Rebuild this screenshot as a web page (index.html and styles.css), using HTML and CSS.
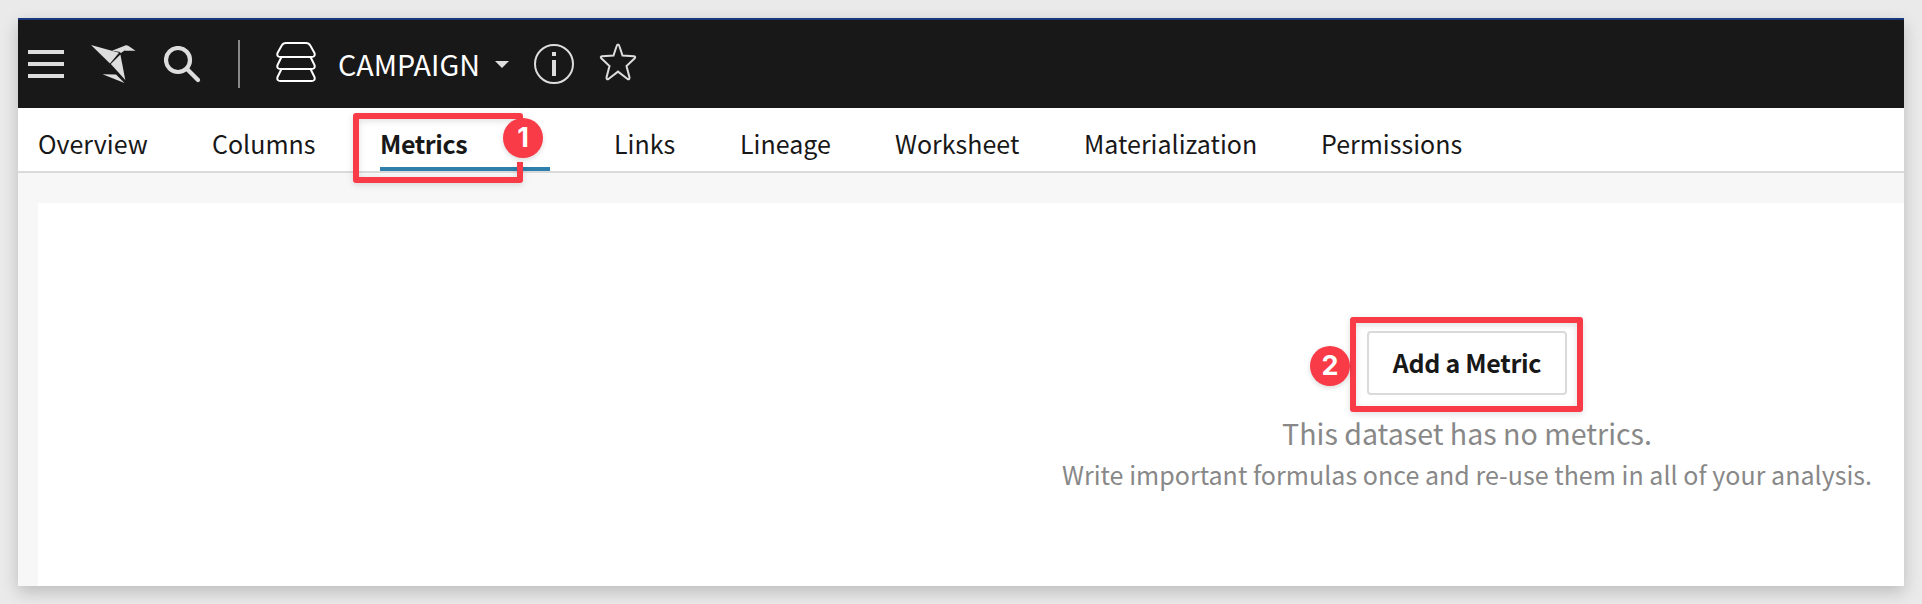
FILE: index.html
```html
<!DOCTYPE html>
<html lang="en">
<head>
<meta charset="utf-8">
<title>CAMPAIGN</title>
<link rel="stylesheet" href="styles.css">
</head>
<body>
<div class="window">
  <header class="topbar">
    <svg class="icon menu" width="36" height="28" viewBox="0 0 36 28"><path d="M0 2H36M0 14H36M0 26H36"/></svg>
    <svg class="icon bird" width="46" height="40" viewBox="0 0 46 40">
      <path d="M1 2L29 9.7L20 20.500Z"/><path d="M22 7.800L36.500 2L38 5L31 10L29 8.700Z"/><path d="M37.500 2.300L45.500 7.700H34.500Z"/><path d="M20.800 21L30.400 11.500L35.300 37Z"/><path d="M12.500 31.200L26 31.400L34.500 40Z"/>
    </svg>
    <svg class="icon search" width="37" height="37" viewBox="0 0 37 37"><circle cx="14" cy="14" r="12"/><path d="M23 23L34 34" stroke-linecap="round"/></svg>
    <span class="divider"></span>
    <svg class="icon stack" width="40" height="40" viewBox="0 0 40 40">
      <path d="M10 1H30Q33 1 34.3 3.5L38.5 11Q39.5 15 35.500 15H4.500Q.5 15 1.500 11L5.700 3.500Q7 1 10 1ZM5.500 15L1.500 23Q.5 27 4.500 27H35.500Q39.500 27 38.500 23L34.500 15M5.500 27L1.500 35Q.5 39 4.500 39H35.500Q39.500 39 38.500 35L34.500 27"/>
    </svg>
    <span class="title">CAMPAIGN</span>
    <svg class="caret" width="14" height="7" viewBox="0 0 14 7"><path d="M0 0H14L7 7Z"/></svg>
    <svg class="icon info" width="40" height="40" viewBox="0 0 40 40"><circle cx="20" cy="20" r="19"/><path d="M18 8H22V12H18ZM18 16H22V32H18Z"/></svg>
    <svg class="icon star" width="38" height="38" viewBox="0 0 38 38"><path d="M19 1.500Q20 1.500 20.700 4L23.500 12.500L35 13.300Q37 13.700 35.700 15.300L27.500 23L30.500 34.500Q30.500 37 28.500 36L19 28.600L9.500 36Q7.500 37 7.500 34.500L10.500 23L2.300 15.300Q1 13.700 3 13.300L14.500 12.500L17.300 4Q18 1.500 19 1.500Z"/></svg>
  </header>
  <nav class="tabs">
    <a class="tab overview">Overview</a>
    <a class="tab columns">Columns</a>
    <a class="tab active">Metrics</a>
    <a class="tab links">Links</a>
    <a class="tab lineage">Lineage</a>
    <a class="tab worksheet">Worksheet</a>
    <a class="tab material">Materialization</a>
    <a class="tab perms">Permissions</a>
  </nav>
  <main class="content">
    <section class="panel">
      <button class="add">Add a Metric</button>
      <p class="lead">This dataset has no metrics.</p>
      <p class="hint">Write important formulas once and re-use them in all of your analysis.</p>
    </section>
  </main>
</div>
<svg class="callout callout-tab" width="170" height="70" viewBox="0 0 170 70"><path d="M167 6V3H3V67H167V49"/></svg>
<span class="badge badge-one">1</span>
<svg class="callout callout-add" width="233" height="95" viewBox="0 0 233 95"><rect x="3" y="3" width="227" height="89"/></svg>
<span class="badge badge-two">2</span>
</body>
</html>
```
FILE: styles.css
```css
* { box-sizing: border-box; }
body {
  margin: 0;
  padding: 18px;
  height: 604px;
  overflow: hidden;
  position: relative;
  background: #eaeaea;
  color: #181818;
  font-family: "Noto Sans CJK SC", "Noto Sans", sans-serif;
}
.window {
  width: 1886px;
  height: 568px;
  display: flex;
  flex-direction: column;
  background: #f7f7f7;
  box-shadow: 0 6px 16px rgba(0, 0, 0, .2);
}
.topbar {
  height: 90px;
  flex: none;
  display: flex;
  align-items: flex-start;
  padding-left: 10px;
  background: #181818;
  border-top: 2px solid #18377c;
}
.icon { flex: none; fill: none; stroke: #ddd; stroke-width: 2; }
.menu { margin-top: 30px; stroke-width: 4; }
.bird { margin: 23px 0 0 26px; fill: #ddd; stroke: none; }
.search { margin: 26px 0 0 28px; stroke-width: 4.2; }
.divider { width: 2px; height: 48px; margin: 20px 0 0 37px; background: #888; }
.stack { margin: 22px 0 0 36px; stroke: #fff; }
.title {
  width: 142px;
  margin: 20px 0 0 22px;
  color: #fff;
  font-size: 28.7px;
  line-height: 48px;
  white-space: nowrap;
}
.caret { margin: 41px 0 0 15px; fill: #ddd; }
.info { margin: 24px 0 0 25px; }
.info path { fill: #ddd; stroke: none; }
.star { margin: 23px 0 0 25px; }
.tabs {
  height: 65px;
  flex: none;
  display: flex;
  gap: 64px;
  padding-left: 20px;
  background: #fff;
  border-bottom: 2px solid #dadada;
  font-size: 25px;
}
.tab { flex: none; height: 63px; line-height: 70px; white-space: nowrap; }
.overview { width: 110px; }
.columns { width: 104px; }
.active { width: 170px; font-weight: 700; letter-spacing: -.42px; border-bottom: 4px solid #2e7fac; }
.links { width: 62px; }
.lineage { width: 91px; }
.worksheet { width: 125px; }
.material { width: 173px; }
.content { flex: 1; padding: 30px 0 0 20px; overflow: hidden; }
.panel {
  width: 2858px;
  height: 400px;
  padding-top: 128px;
  display: flex;
  flex-direction: column;
  align-items: center;
  background: #fff;
}
.add {
  width: 200px;
  height: 64px;
  padding: 0 0 2px;
  background: #fff;
  border: 2px solid #dadada;
  border-radius: 4px;
  color: #181818;
  font: 700 25px "Noto Sans CJK SC", "Noto Sans", sans-serif;
  letter-spacing: -.3px;
  white-space: nowrap;
}
.lead, .hint { margin: 0; color: #888; white-space: nowrap; }
.lead { margin-top: 16px; font-size: 28.6px; line-height: 44px; }
.hint { font-size: 25px; line-height: 38px; letter-spacing: .03px; }
.callout {
  position: absolute;
  overflow: visible;
  fill: none;
  stroke: #f93b48;
  stroke-width: 6;
  stroke-linejoin: round;
  filter: drop-shadow(0 2px 3px rgba(0, 0, 0, .13));
}
.callout-tab { left: 353px; top: 113px; }
.callout-add { left: 1350px; top: 317px; }
.badge {
  position: absolute;
  width: 40px;
  height: 40px;
  border-radius: 50%;
  background: #f93b48;
  color: #fff;
  font: 700 27px/39px Inter, sans-serif;
  text-align: center;
  box-shadow: 0 2px 5px rgba(0, 0, 0, .15);
}
.badge-one { left: 503px; top: 118px; }
.badge-two { left: 1310px; top: 346px; }
```
